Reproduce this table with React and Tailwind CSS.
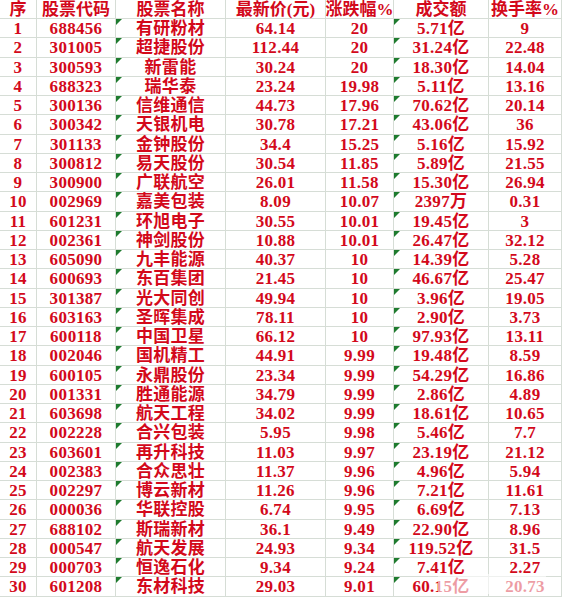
import React from "react";

const header = ["序", "股票代码", "股票名称", "最新价(元)", "涨跌幅%", "成交额", "换手率%"];

const rows = [
  ["1", "688456", "有研粉材", "64.14", "20", "5.71亿", "9"],
  ["2", "301005", "超捷股份", "112.44", "20", "31.24亿", "22.48"],
  ["3", "300593", "新雷能", "30.24", "20", "18.30亿", "14.04"],
  ["4", "688323", "瑞华泰", "23.24", "19.98", "5.11亿", "13.16"],
  ["5", "300136", "信维通信", "44.73", "17.96", "70.62亿", "20.14"],
  ["6", "300342", "天银机电", "30.78", "17.21", "43.06亿", "36"],
  ["7", "301133", "金钟股份", "34.4", "15.25", "5.16亿", "15.92"],
  ["8", "300812", "易天股份", "30.54", "11.85", "5.89亿", "21.55"],
  ["9", "300900", "广联航空", "26.01", "11.58", "15.30亿", "26.94"],
  ["10", "002969", "嘉美包装", "8.09", "10.07", "2397万", "0.31"],
  ["11", "601231", "环旭电子", "30.55", "10.01", "19.45亿", "3"],
  ["12", "002361", "神剑股份", "10.88", "10.01", "26.47亿", "32.12"],
  ["13", "605090", "九丰能源", "40.37", "10", "14.39亿", "5.28"],
  ["14", "600693", "东百集团", "21.45", "10", "46.67亿", "25.47"],
  ["15", "301387", "光大同创", "49.94", "10", "3.96亿", "19.05"],
  ["16", "603163", "圣晖集成", "78.11", "10", "2.90亿", "3.73"],
  ["17", "600118", "中国卫星", "66.12", "10", "97.93亿", "13.11"],
  ["18", "002046", "国机精工", "44.91", "9.99", "19.48亿", "8.59"],
  ["19", "600105", "永鼎股份", "23.34", "9.99", "54.29亿", "16.86"],
  ["20", "001331", "胜通能源", "34.79", "9.99", "2.86亿", "4.89"],
  ["21", "603698", "航天工程", "34.02", "9.99", "18.61亿", "10.65"],
  ["22", "002228", "合兴包装", "5.95", "9.98", "5.46亿", "7.7"],
  ["23", "603601", "再升科技", "11.03", "9.97", "23.19亿", "21.12"],
  ["24", "002383", "合众思壮", "11.37", "9.96", "4.96亿", "5.94"],
  ["25", "002297", "博云新材", "11.26", "9.96", "7.21亿", "11.61"],
  ["26", "000036", "华联控股", "6.74", "9.95", "6.69亿", "7.13"],
  ["27", "688102", "斯瑞新材", "36.1", "9.49", "22.90亿", "8.96"],
  ["28", "000547", "航天发展", "24.93", "9.34", "119.52亿", "31.5"],
  ["29", "000703", "恒逸石化", "9.34", "9.24", "7.41亿", "2.27"],
  ["30", "601208", "东材科技", "29.03", "9.01", "60.15亿", "20.73"],
];

function Tri() {
  return (
    <svg className="absolute left-0 top-0" width="6" height="6" viewBox="0 0 6 6">
      <polygon points="0,0 6,0 0,6" fill="#1e7b2e" />
    </svg>
  );
}

function Cell({ children, tri }) {
  return (
    <div className="relative flex items-center justify-center border-r border-b border-[#d6ddd6] h-[19.26px] leading-none whitespace-nowrap overflow-visible">
      {tri && <Tri />}
      <span className="relative top-[0.5px] tracking-[0.3px]">{children}</span>
    </div>
  );
}

export default function App() {
  return (
    <div
      className="relative w-[562px] h-[597px] overflow-hidden bg-white text-[#d3091b] font-bold text-[17px]"
      style={{ fontFamily: '"Liberation Serif", "Noto Sans CJK SC", serif' }}
    >
      <div className="grid grid-cols-[37px_79px_110px_100px_68px_95px_73px]">
        {header.map((h, i) => (
          <div
            key={i}
            className="flex items-center justify-center border-r border-b border-[#d6ddd6] h-[19px] leading-none whitespace-nowrap"
          >
            {h}
          </div>
        ))}
        {rows.map((r, ri) =>
          r.map((c, ci) => (
            <Cell key={ri + "-" + ci} tri={ci === 2 || ci === 5}>
              {c}
            </Cell>
          ))
        )}
      </div>
      <div className="absolute left-[438px] top-[574px] w-[108px] h-[20px] bg-white/60" />
    </div>
  );
}
